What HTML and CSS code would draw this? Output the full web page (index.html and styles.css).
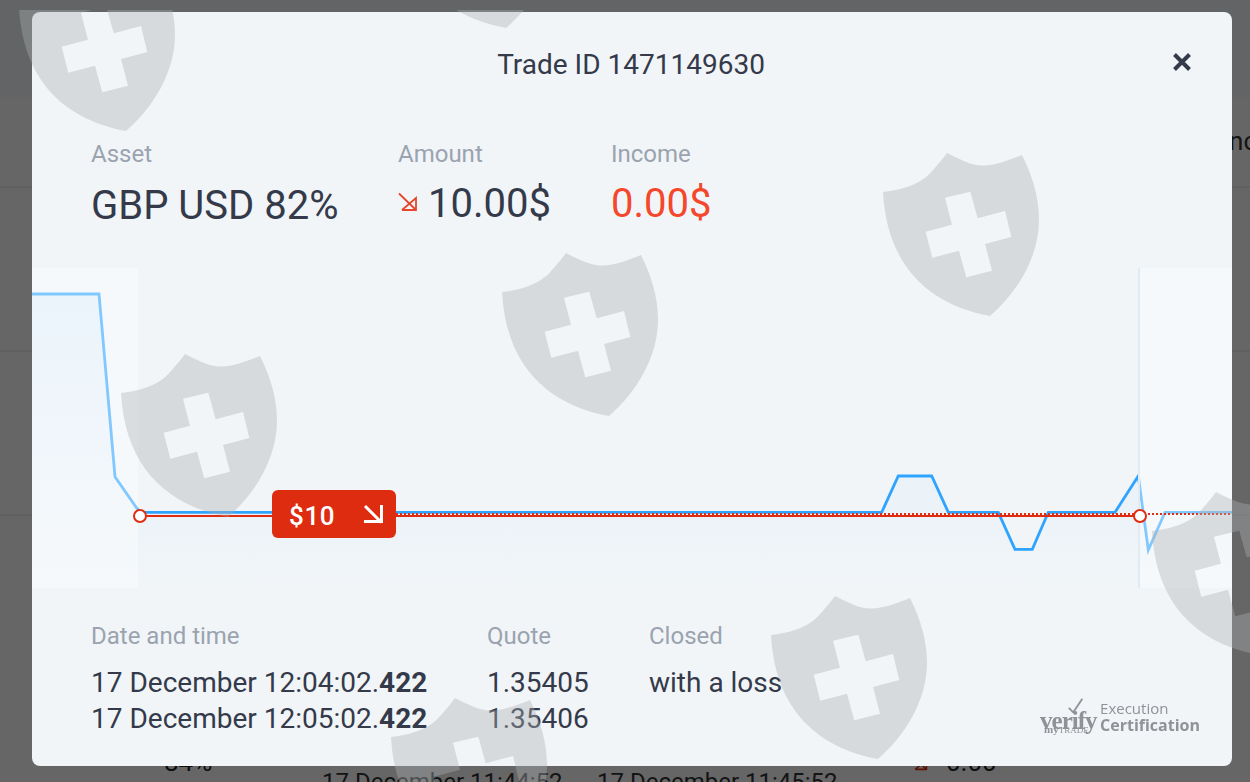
FILE: index.html
```html
<!DOCTYPE html>
<html lang="en">
<head>
<meta charset="utf-8">
<title>Trade ID 1471149630</title>
<link rel="stylesheet" href="styles.css">
</head>
<body>
<svg class="defs" width="0" height="0" aria-hidden="true">
  <defs>
    <path id="shield" fill-rule="evenodd" d="M66 3C78 9 90 15.500 102 15.500C115 15.500 128 10 141 5C152 27 158 48 158 70C158 107 136 143 109 166C50 155 6 118 2 42C22 40 42 33 52 20C57 14 62 9 66 3ZM64 47.700L71 74.700L44.700 81.700L51.300 107.700L78 100.700L85.300 127.300L111 120.700L104 94L130.300 87L124 61L96.700 68.300L89.300 41.700Z"/>
  </defs>
</svg>

<main class="page">
  <div class="band band-top"></div>
  <div class="band band-head"><span class="cut-word">Income</span></div>
  <div class="band"></div>
  <div class="band"></div>
  <div class="band band-last">
    <span class="bg-pct">84%</span>
    <span class="bg-date">17 December 11:44:52</span>
    <span class="bg-date bg-date-end">17 December 11:45:52</span>
    <svg class="bg-arrow" width="16" height="16" viewBox="0 0 20 20"><path d="M1 1.500L17.500 17.500M4 18H18V6L4 18" fill="none" stroke="#e02d10" stroke-width="2"/></svg>
    <span class="bg-val">0.00</span>
  </div>
</main>

<div class="overlay">
  <section class="modal">
    <header class="modal-head">
      <h1 class="title">Trade ID 1471149630</h1>
      <button class="close" aria-label="Close">
        <svg width="20" height="20" viewBox="0 0 20 20"><path d="M2.500 2.500L17.500 17.500M17.500 2.500L2.500 17.500" fill="none" stroke="#343a4a" stroke-width="4"/></svg>
      </button>
    </header>

    <div class="stats">
      <div class="stat stat-asset">
        <div class="label">Asset</div>
        <div class="asset">GBP USD 82%</div>
      </div>
      <div class="stat stat-amount">
        <div class="label">Amount</div>
        <div class="value">
          <svg class="down" width="20" height="20" viewBox="0 0 20 20"><path d="M1 1.500L17.500 17.500M4 18H18V6L4 18" fill="none" stroke="#e5472c" stroke-width="1.800"/></svg>
          10.00$
        </div>
      </div>
      <div class="stat">
        <div class="label">Income</div>
        <div class="value loss">0.00$</div>
      </div>
    </div>

    <div class="chart">
      <svg class="chart-svg" width="1200" height="320" viewBox="32 268 1200 320">
        <defs>
          <linearGradient id="area" x1="0" y1="0" x2="0" y2="1">
            <stop offset="0" stop-color="#2ea3ff" stop-opacity=".1"/>
            <stop offset="1" stop-color="#2ea3ff" stop-opacity="0"/>
          </linearGradient>
        </defs>
        <path fill="url(#area)" d="M32 294H99L115 476.700L139.600 512.300H881.700L898.300 476H931.700L948.300 512.300H998.300L1015 549.300H1032.300L1048.300 512.300H1115L1138.300 476L1148.300 550L1165 512.300H1232V588H32Z"/>
        <path fill="none" stroke="#2ea3ff" stroke-width="2.800" d="M32 294H99L115 476.700L139.600 512.300H881.700L898.300 476H931.700L948.300 512.300H998.300L1015 549.300H1032.300L1048.300 512.300H1115L1138.300 476L1148.300 550L1165 512.300H1232"/>
        <rect class="pane" x="32" y="268" width="106" height="320"/>
        <rect class="pane" x="1140" y="268" width="92" height="320"/>
        <path d="M1139 268V588" stroke="#e3ebf2" stroke-width="2"/>
        <path d="M140 516H1140" stroke="#e02d10" stroke-width="2"/>
        <path d="M396 514H1232" stroke="#e02d10" stroke-width="2" stroke-dasharray="2 2"/>
        <circle cx="140" cy="516" r="6" fill="#fff" stroke="#e02d10" stroke-width="2"/>
        <circle cx="1140" cy="516" r="6" fill="#fff" stroke="#e02d10" stroke-width="2"/>
      </svg>
      <div class="tag">
        <span class="tag-text">$10</span>
        <svg width="20" height="20" viewBox="0 0 20 20"><path d="M2 2L18.500 18.500M1 17.500H18.500V1" fill="none" stroke="#fff" stroke-width="3"/></svg>
      </div>
    </div>

    <footer class="details">
      <div class="col col-date">
        <div class="label">Date and time</div>
        <div class="rows">
          <div>17 December 12:04:02.<b>422</b></div>
          <div>17 December 12:05:02.<b>422</b></div>
        </div>
      </div>
      <div class="col col-quote">
        <div class="label">Quote</div>
        <div class="rows">
          <div>1.35405</div>
          <div>1.35406</div>
        </div>
      </div>
      <div class="col col-closed">
        <div class="label">Closed</div>
        <div class="rows"><div>with a loss</div></div>
      </div>
      <div class="logo">
        <div class="logo-mark">
          <svg class="tick" width="18" height="18" viewBox="0 0 20 20"><path d="M2 12L7 17L17 2" fill="none" stroke="#8f9296" stroke-width="2"/></svg>
          <span class="verify">verify</span>
          <span class="mytrade"><b>my</b>TRADE</span>
        </div>
        <div class="logo-text">
          <span class="exec">Execution</span>
          <span class="cert">Certification</span>
        </div>
      </div>
    </footer>
  </section>

  <div class="watermarks" aria-hidden="true">
    <svg class="mark m1" width="160" height="170" viewBox="0 0 160 170"><use href="#shield"/></svg>
    <svg class="mark m2" width="160" height="170" viewBox="0 0 160 170"><use href="#shield"/></svg>
    <svg class="mark m3" width="160" height="170" viewBox="0 0 160 170"><use href="#shield"/></svg>
    <svg class="mark m4" width="160" height="170" viewBox="0 0 160 170"><use href="#shield"/></svg>
    <svg class="mark m5" width="160" height="170" viewBox="0 0 160 170"><use href="#shield"/></svg>
    <svg class="mark m6" width="160" height="170" viewBox="0 0 160 170"><use href="#shield"/></svg>
    <svg class="mark m7" width="160" height="170" viewBox="0 0 160 170"><use href="#shield"/></svg>
    <svg class="mark m8" width="160" height="170" viewBox="0 0 160 170"><use href="#shield"/></svg>
  </div>
</div>
</body>
</html>
```

FILE: styles.css
```css
* { box-sizing: border-box; }
html, body { margin: 0; height: 100%; overflow: hidden; }
body { font-family: Roboto, "Liberation Sans", sans-serif; background: #fff; color: #343a4a; }
.defs { position: absolute; }

.page { height: 782px; display: flex; flex-direction: column; background: #fff; overflow: hidden; }
.band { height: 164px; border-bottom: 2px solid #f0f0f0; flex: none; }
.band-top { height: 97px; background: #f8fafd; border-bottom: 0; }
.band-head { height: 91px; padding: 29px 0 0 1222px; white-space: nowrap; }
.band-last { height: 330px; border-bottom: 0; padding: 231px 0 0 164px; display: flex; align-items: flex-start; font-size: 26px; color: #222; white-space: nowrap; }
.cut-word { font-size: 26px; color: #333; }
.bg-pct { width: 158px; }
.bg-date { width: 275px; margin-top: 21px; font-size: 24px; color: #333; }
.bg-date-end { width: 315px; }
.bg-arrow { margin: 8px 18px 0 0; flex: none; }
.bg-val { display: block; }

.overlay { position: absolute; inset: 0; background: rgba(0,0,0,.6); padding: 12px 18px 16px 32px; overflow: hidden; }
.modal { width: 1200px; height: 754px; background: #f1f5f8; border-radius: 8px; display: flex; flex-direction: column; overflow: hidden; }

.modal-head { height: 104px; padding: 35px 2px 0 0; display: flex; justify-content: center; position: relative; flex: none; }
.title { margin: 0; font-size: 28px; line-height: 36px; font-weight: 400; }
.close { position: absolute; top: 40px; right: 40px; width: 20px; height: 20px; padding: 0; border: 0; background: none; }
.close svg { display: block; }

.stats { height: 152px; padding: 24px 0 0 59px; display: flex; flex: none; }
.stat-asset { width: 307px; }
.stat-amount { width: 213px; }
.label { font-size: 24px; line-height: 28px; color: #9aa3af; }
.asset { margin-top: 15px; font-size: 40px; line-height: 46px; }
.value { margin-top: 13px; font-size: 40px; line-height: 46px; display: flex; align-items: center; gap: 10px; }
.down { margin-bottom: 5px; }
.loss { color: #f4472b; }

.chart { height: 320px; position: relative; flex: none; }
.chart-svg { display: block; }
.pane { fill: #fff; fill-opacity: .4; }
.tag { position: absolute; left: 240px; top: 222px; width: 124px; height: 48px; border-radius: 6px; background: #de2c10; color: #fff; display: flex; align-items: center; justify-content: space-between; padding: 0 13px 0 17px; font-size: 26px; font-weight: 500; letter-spacing: .6px; }
.tag-text { margin-top: 3px; }
.tag svg { display: block; }

.details { flex: 1; padding: 32px 32px 0 59px; display: flex; }
.col-date { width: 396px; }
.col-quote { width: 162px; }
.col-closed { flex: 1; }
.details .label { line-height: 32px; }
.rows { margin-top: 13px; font-size: 28px; line-height: 36px; }

.logo { align-self: flex-end; margin-bottom: 32px; display: flex; align-items: flex-end; gap: 5px; color: #8f9296; filter: blur(.3px); }
.logo-mark { position: relative; width: 55px; height: 34px; }
.tick { position: absolute; left: 27px; top: -3px; }
.verify { position: absolute; left: 0; top: 8px; font: 700 25px/26px "Liberation Serif", serif; letter-spacing: -1px; }
.mytrade { position: absolute; left: 4px; top: 24px; font: 400 9px/10px "Liberation Serif", serif; }
.mytrade b { font-size: 11px; }
.logo-text { display: flex; flex-direction: column; font-family: "Open Sans", sans-serif; }
.exec { font-size: 15px; line-height: 17px; }
.cert { font-size: 16px; line-height: 17px; font-weight: 700; }

.watermarks { position: absolute; left: 0; right: 0; top: 10px; bottom: 0; overflow: hidden; pointer-events: none; }
.mark { position: absolute; fill: #acb0b3; opacity: .38; }
.m1 { left: 17px; top: -45px; }
.m2 { left: 397px; top: -148px; }
.m3 { left: 881px; top: 140px; }
.m4 { left: 500px; top: 240px; }
.m5 { left: 119px; top: 341px; }
.m6 { left: 1150px; top: 479px; }
.m7 { left: 769px; top: 583px; }
.m8 { left: 389px; top: 685px; }
```
